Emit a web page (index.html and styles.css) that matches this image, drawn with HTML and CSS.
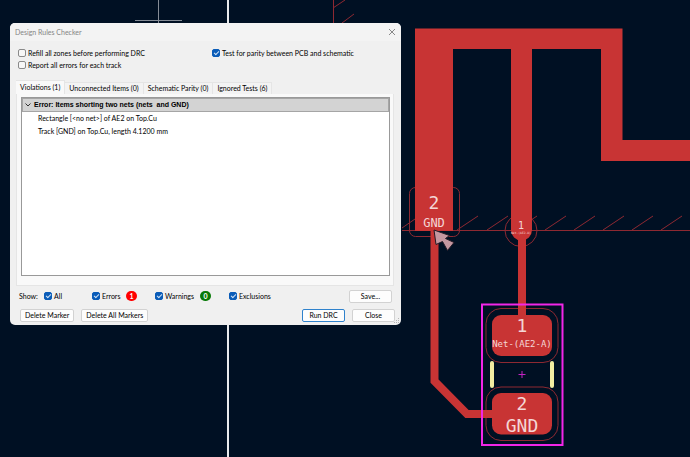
FILE: index.html
```html
<!DOCTYPE html>
<html lang="en">
<head>
    <meta charset="utf-8">
    <title>Design Rules Checker</title>
    <link rel="stylesheet" href="styles.css">
</head>
<body>
<main class="board">
    <svg class="canvas" viewBox="0 0 690 457" preserveAspectRatio="xMinYMin slice" role="img" aria-label="PCB layout">
        <!-- sheet guides -->
        <path class="guide" d="M228 0V457"/>
        <path class="cross" d="M158.500 0V24M135 20.500H182"/>
        <!-- zone outline and hatching -->
        <path class="zone" d="M333.500 0V24M333 8L345 0M342 23L354 14M402 230.500H690
            M402 228L415 219M457 230L478 216M487 230L508 216M516 230L537 216M545 230L566 216
            M574 230L595 216M603 230L624 216M632 230L653 216M661 230L682 216"/>
        <!-- clearance outlines -->
        <rect class="zone" x="409.500" y="187.500" width="50" height="49" rx="6"/>
        <circle class="zone" cx="521" cy="230.500" r="16"/>
        <rect class="zone" x="486" y="308.500" width="72" height="54" rx="15"/>
        <rect class="zone" x="486" y="387" width="72" height="53.500" rx="15"/>
        <!-- antenna and tracks -->
        <path class="copper" d="M415 28.500H622.500V140H690V161H601V49H532V230A10.500 10.500 0 0 1 511 230V49H453V231H415Z"/>
        <path class="track" d="M434.500 230V381L467 414H500"/>
        <path class="track" d="M522 235V320"/>
        <rect class="copper" x="492" y="315" width="60" height="41" rx="9"/>
        <rect class="copper" x="492" y="393" width="60" height="41.500" rx="9"/>
        <!-- footprint -->
        <rect class="courtyard" x="482" y="304.500" width="80.500" height="140.500"/>
        <path class="silk" d="M492 363V386M552 363V386"/>
        <path class="anchor" d="M518.500 374.500H525.500M522 371V378"/>
        <text class="label pad" x="434" y="209">2</text>
        <text class="label net" x="434" y="227">GND</text>
        <text class="label small" x="521" y="229">1</text>
        <text class="label tiny" x="521" y="234">Net-(AE2-A)</text>
        <text class="label pad" x="522" y="332">1</text>
        <text class="label name" x="522" y="347">Net-(AE2-A)</text>
        <text class="label pad" x="522" y="410">2</text>
        <text class="label pad" x="522" y="432">GND</text>
        <!-- pointer -->
        <path class="pointer" d="M434 230L449.500 235.500L445.500 238.500L454 242.500L447.500 250.500L442.500 241.500L436 244.500Z"/>
    </svg>

    <section class="dialog" role="dialog" aria-labelledby="title">
        <header class="titlebar">
            <span id="title">Design Rules Checker</span>
            <button class="x" type="button" aria-label="Close window">
                <svg width="8" height="8" viewBox="0 0 8 8"><path d="M1 1L7 7M7 1L1 7"/></svg>
            </button>
        </header>
        <form class="body">
            <div class="options">
                <label><input type="checkbox">Refill all zones before performing DRC</label>
                <label><input type="checkbox" checked>Test for parity between PCB and schematic</label>
                <label><input type="checkbox">Report all errors for each track</label>
            </div>
            <div class="tabs" role="tablist">
                <button class="tab active" type="button" role="tab" aria-selected="true">Violations (1)</button>
                <button class="tab" type="button" role="tab">Unconnected Items (0)</button>
                <button class="tab" type="button" role="tab">Schematic Parity (0)</button>
                <button class="tab" type="button" role="tab">Ignored Tests (6)</button>
            </div>
            <div class="page" role="tabpanel">
                <details class="tree" open>
                    <summary>
                        <svg width="6" height="4" viewBox="0 0 6 4"><path d="M.5 .5L3 3L5.500 .5"/></svg>
                        Error: Items shorting two nets (nets&nbsp; and GND)
                    </summary>
                    <div class="item">Rectangle [&lt;no net&gt;] of AE2 on Top.Cu</div>
                    <div class="item">Track [GND] on Top.Cu, length 4.1200 mm</div>
                </details>
            </div>
            <div class="show">
                <span class="caption">Show:</span>
                <label class="all"><input type="checkbox" checked>All</label>
                <div class="filter">
                    <label><input type="checkbox" checked>Errors</label>
                    <span class="badge red">1</span>
                </div>
                <div class="filter wide">
                    <label><input type="checkbox" checked>Warnings</label>
                    <span class="badge green">0</span>
                </div>
                <label><input type="checkbox" checked>Exclusions</label>
                <button class="btn save" type="button">Save...</button>
            </div>
            <div class="actions">
                <button class="btn" type="button">Delete Marker</button>
                <button class="btn" type="button">Delete All Markers</button>
                <button class="btn run" type="button">Run DRC</button>
                <button class="btn close" type="button">Close</button>
            </div>
        </form>
        <svg class="grip" width="6" height="6" viewBox="0 0 6 6"><path d="M4 0h1v1h-1zM2 2h1v1h-1zM4 2h1v1h-1zM0 4h1v1h-1zM2 4h1v1h-1zM4 4h1v1h-1z"/></svg>
    </section>
</main>
</body>
</html>
```
FILE: styles.css
```css
*{
    box-sizing: border-box;
}
body{
    margin: 0;
    background: #001023;
    font: 7px/12px Lato, "Open Sans", sans-serif;
    color: #000;
}
.board{
    position: relative;
    min-height: 100vh;
    overflow: hidden;
}
.canvas{
    display: block;
    width: 100%;
    height: 100vh;
}
.canvas path, .canvas rect, .canvas circle{
    fill: none;
}
.canvas .guide{
    stroke: #e8eaec;
    stroke-width: 2;
}
.canvas .cross{
    stroke: #858c96;
}
.canvas .zone{
    stroke: #8e2932;
}
.canvas .copper{
    fill: #c83434;
}
.canvas .track{
    stroke: #c83434;
    stroke-width: 8;
}
.canvas .courtyard{
    stroke: #f226e8;
    stroke-width: 2;
}
.canvas .silk{
    stroke: #f2eda1;
    stroke-width: 4;
    stroke-linecap: round;
}
.canvas .anchor{
    stroke: #c322c3;
}
.canvas .pointer{
    fill: #c497a0;
    stroke: #241a26;
}
.label{
    fill: #f4d6d6;
    font-family: "DejaVu Sans Mono", monospace;
    text-anchor: middle;
}
.pad{
    font-size: 18px;
}
.net{
    font-size: 12px;
}
.name{
    font-size: 9px;
}
.small{
    font-size: 10px;
}
.tiny{
    font-size: 3px;
}

/* dialog window */
.dialog{
    position: absolute;
    left: 10px;
    top: 23px;
    width: 391px;
    background: #f0f0f0;
    border-radius: 5px;
    overflow: hidden;
}
.titlebar{
    display: flex;
    justify-content: space-between;
    align-items: center;
    height: 18px;
    padding: 0 5px;
    background: #f3f3f3;
    color: #858585;
}
button{
    font: inherit;
    color: inherit;
    padding: 0;
    margin: 0;
}
.x{
    display: flex;
    border: 0;
    background: none;
}
.x svg, summary svg{
    fill: none;
    stroke: #888;
}
.body{
    padding: 6px 6px 3px;
}
.options{
    display: grid;
    grid-template-columns: 194px 1fr;
    padding: 0 2px;
}
label{
    display: flex;
    align-items: center;
    gap: 2px;
    white-space: nowrap;
}
input{
    appearance: none;
    width: 8px;
    height: 8px;
    margin: 0;
    border: 1px solid #8a8a8a;
    border-radius: 2px;
    background: #f7f7f7;
}
input:checked{
    border-color: #0a5cb8;
    background: #0a5cb8;
}
input:checked::before{
    content: "";
    display: block;
    width: 4px;
    height: 2px;
    margin: 1px;
    border: solid #cfe2f5;
    border-width: 0 0 1px 1px;
    transform: rotate(-45deg);
}
.tabs{
    display: flex;
    align-items: flex-end;
    margin-top: 9px;
}
.tab{
    height: 12px;
    padding: 0 4px;
    border: 1px solid #e5e5e5;
    border-width: 1px 1px 0 0;
    background: #f3f3f3;
    line-height: 11px;
    white-space: nowrap;
}
.tab.active{
    height: 14px;
    background: #f9f9f9;
}
.page{
    margin-right: 1px;
    padding: 3px 3px 9px 4px;
    border: 1px solid #e5e5e5;
    border-top: 0;
    background: #f9f9f9;
}
.tree{
    min-height: 179px;
    border: 1px solid #999;
    background: #fff;
}
summary{
    display: flex;
    align-items: center;
    gap: 3px;
    height: 14px;
    padding: 0 2px;
    border: 1px solid #a5a5a5;
    background: #d3d3d3;
    font-family: "Liberation Sans", sans-serif;
    font-weight: bold;
    list-style: none;
}
summary svg{
    stroke: #333;
}
.item{
    padding-left: 16px;
    line-height: 13px;
}
.show{
    display: flex;
    align-items: center;
    height: 12px;
    margin: 4px 3px 0 3px;
}
.caption{
    width: 25px;
}
.all{
    width: 48px;
}
.filter{
    display: flex;
    align-items: center;
    justify-content: space-between;
    width: 45px;
    margin-right: 18px;
}
.wide{
    width: 56px;
}
.badge{
    width: 11px;
    height: 10px;
    border-radius: 5px;
    color: #fff;
    font-weight: bold;
    line-height: 10px;
    text-align: center;
}
.red{
    background: #f00;
}
.green{
    background: #087a08;
}
.btn{
    height: 13px;
    padding: 0 4px;
    border: 1px solid #d2d2d2;
    border-radius: 2px;
    background: #fdfdfd;
    line-height: 11px;
    white-space: nowrap;
}
.save, .run, .close{
    width: 43px;
}
.save, .run{
    margin-left: auto;
}
.actions{
    display: flex;
    gap: 7px;
    margin-top: 7px;
    padding-left: 4px;
}
.run{
    border-color: #2f82cc;
}
.grip{
    position: absolute;
    right: 1px;
    bottom: 1px;
    fill: #b5b5b5;
}
```
